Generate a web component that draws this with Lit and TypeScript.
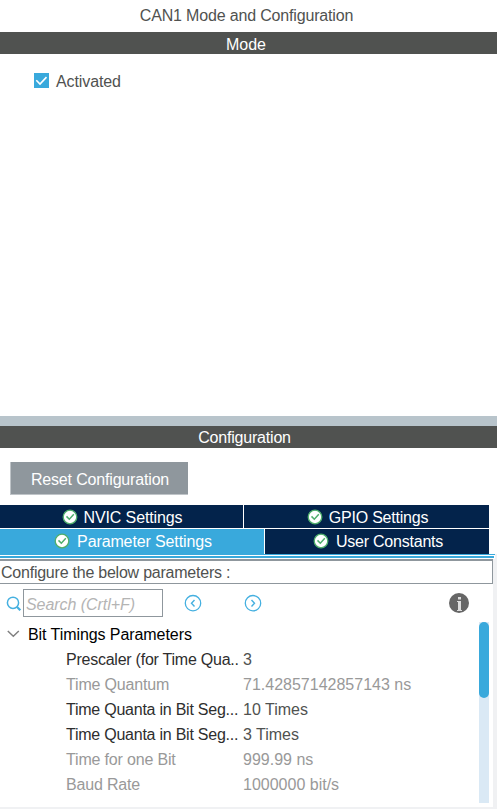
import { LitElement, html, css, svg } from "lit";
import { customElement } from "lit/decorators.js";
import { classMap } from "lit/directives/class-map.js";

interface Param {
  name: string;
  value: string;
  readonly?: boolean;
}

const PARAMS: Param[] = [
  { name: "Prescaler (for Time Qua..", value: "3" },
  { name: "Time Quantum", value: "71.42857142857143 ns", readonly: true },
  { name: "Time Quanta in Bit Seg...", value: "10 Times" },
  { name: "Time Quanta in Bit Seg...", value: "3 Times" },
  { name: "Time for one Bit", value: "999.99 ns", readonly: true },
  { name: "Baud Rate", value: "1000000 bit/s", readonly: true },
];

const okIcon = html`<svg class="ok" viewBox="0 0 16 16" width="16" height="16">
  <circle cx="8" cy="8" r="6.8" fill="#fff" stroke="#4fae6c" stroke-width="1.3" />
  <path d="M4.5 7.4 7.3 10.2 11.8 5.2" fill="none" stroke="#4fae6c" stroke-width="1.5" />
</svg>`;

const circleArrow = (d: string) => html`<svg viewBox="0 0 18 18" width="18" height="18">
  ${svg`<circle cx="9" cy="9.2" r="7.7" fill="none" stroke="#45b0e0" stroke-width="1.3" />
  <path d=${d} fill="none" stroke="#45b0e0" stroke-width="1.4" />`}
</svg>`;

@customElement("app-root")
export class AppRoot extends LitElement {
  static styles = css`
    :host {
      display: flex;
      flex-direction: column;
      box-sizing: border-box;
      height: 809px;
      overflow: hidden;
      background: #fff;
      color: #505250;
      font: 16px/22px "Liberation Sans", Arial, sans-serif;
      white-space: nowrap;
    }
    * { box-sizing: border-box; }
    svg { display: block; flex: none; }
    .title { height: 32px; line-height: 32px; padding-right: 4px; text-align: center; letter-spacing: -0.17px; }
    .bar { height: 22px; padding-right: 5px; background: #505250; color: #fff; text-align: center; line-height: 25px; }
    .cfg { line-height: 23px; padding-right: 8px; letter-spacing: -0.2px; }
    .mode { height: 362px; padding: 19px 34px; }
    .check { display: flex; align-items: center; gap: 7px; height: 16px; line-height: 16px; letter-spacing: -0.1px; }
    .check svg { margin-bottom: 1px; }
    .check span { padding-top: 2px; }
    .splitter { height: 10px; background: #b8c4cb; }
    .actions { height: 57px; padding: 14px 10px 0; }
    .reset {
      display: block; width: 178px; height: 33px; padding: 3px 0 0 1px; margin: 0;
      border: solid #bfc4c8; border-width: 0 0 1px 1px;
      background: #8f979d; color: #fff; font: inherit; letter-spacing: -0.17px;
    }
    .tabs { width: 489px; display: flex; flex-direction: column; gap: 1px; color: #fff; }
    .tabrow { display: flex; gap: 1px; height: 23px; }
    .tabrow.second { height: 25px; }
    .tab { display: flex; align-items: center; justify-content: center; gap: 6px; background: #03234b; }
    .tab span { letter-spacing: -0.12px; line-height: 22px; padding-top: 2px; }
    .second .ok { margin-bottom: 1px; }
    .second .tab span { padding: 0; }
    .nvic { width: 243px; padding-left: 1px; }
    .gpio { width: 245px; padding-left: 2px; }
    .tab.gpio span, .tab.user span { letter-spacing: -0.22px; }
    .param { width: 264px; padding-left: 2px; background: #39a9dc; }
    .tab.param { gap: 7px; }
    .user { width: 224px; padding-left: 2px; }
    .tab.user { gap: 7px; }
    .content { flex: 1; background: #f0f1f3; padding-bottom: 2px; }
    .rule { width: 495px; height: 5px; border-top: 1px solid #39a9dc; background: #fff; padding-top: 1px; }
    .rule i { display: block; width: 494px; height: 2px; background: #39a9dc; }
    .pane { width: 493px; height: 248px; background: #fff; }
    .caption { height: 25px; border: 1px solid #8f979d; border-width: 2px 1px 1px 0; padding-left: 1px; line-height: 24px; letter-spacing: -0.23px; }
    .tools { display: flex; align-items: center; height: 38px; padding: 0 24px 0 6px; }
    .search {
      width: 140px; height: 28px; margin: 0 21px 0 1px; padding: 3px 0 0 2px; border: 1px solid #8f979d;
      border-radius: 0; font: italic 16px "Liberation Sans", Arial, sans-serif; letter-spacing: -0.05px; outline: 0;
    }
    .search::placeholder { color: #b4b4b4; opacity: 1; }
    .gap { width: 42px; }
    .grow { flex: 1; }
    .body { display: flex; justify-content: space-between; height: 181px; padding-right: 4px; }
    .group { display: flex; align-items: center; height: 25px; padding-left: 7px; gap: 8px; color: #000; letter-spacing: -0.07px; }
    .group svg { margin-bottom: 1px; }
    .row { display: grid; grid-template-columns: 177px 200px; height: 25px; line-height: 25px; padding-left: 66px; }
    .name { color: #2e2e2e; letter-spacing: -0.24px; }
    .readonly { color: #999; }
    .readonly .name { color: #999; letter-spacing: -0.17px; }
    .track { width: 10px; height: 181px; background: #dae9f5; }
    .thumb { height: 76px; border-radius: 5px; background: #39a9dc; }
  `;

  render() {
    return html`
      <div class="title">CAN1 Mode and Configuration</div>
      <div class="bar">Mode</div>
      <div class="mode">
        <div class="check">
          <svg viewBox="0 0 15 15" width="15" height="15">
            <rect width="15" height="15" fill="#39a9dc" />
            <path d="M2.3 7.3 6 11 12.5 4.1" fill="none" stroke="#fff" stroke-width="1.6" />
          </svg>
          <span>Activated</span>
        </div>
      </div>
      <div class="splitter"></div>
      <div class="bar cfg">Configuration</div>
      <div class="actions"><button class="reset">Reset Configuration</button></div>
      <div class="tabs">
        <div class="tabrow">
          <div class="tab nvic">${okIcon}<span>NVIC Settings</span></div>
          <div class="tab gpio">${okIcon}<span>GPIO Settings</span></div>
        </div>
        <div class="tabrow second">
          <div class="tab param">${okIcon}<span>Parameter Settings</span></div>
          <div class="tab user">${okIcon}<span>User Constants</span></div>
        </div>
      </div>
      <div class="content">
        <div class="rule"><i></i></div>
        <div class="pane">
          <div class="caption">Configure the below parameters :</div>
          <div class="tools">
            <svg viewBox="0 0 16 16" width="16" height="16">
              <circle cx="7" cy="7.8" r="5.6" fill="none" stroke="#45b0e0" stroke-width="1.5" />
              <path d="M10.8 11.8 14.3 15.2" stroke="#45b0e0" stroke-width="2.3" />
            </svg>
            <input class="search" placeholder="Search (Crtl+F)" />
            ${circleArrow("M10.5 6 7.5 9.2 10.5 12.4")}
            <div class="gap"></div>
            ${circleArrow("M7.5 6 10.5 9.2 7.5 12.4")}
            <div class="grow"></div>
            <svg viewBox="0 0 20 20" width="20" height="20">
              <circle cx="10" cy="10" r="10" fill="#666" />
              <path d="M9 4h3v2.4H9zM8 8h4v9h1v1H8v-1h1V9H8z" fill="#ddd" />
            </svg>
          </div>
          <div class="body">
            <div>
              <div class="group">
                <svg viewBox="0 0 13 8" width="13" height="8">
                  <path d="M.8 1 6.3 6.2 11.8 1" fill="none" stroke="#808080" stroke-width="1.5" />
                </svg>
                <span>Bit Timings Parameters</span>
              </div>
              ${PARAMS.map(
                (p) => html`<div class=${classMap({ row: true, readonly: !!p.readonly })}>
                  <span class="name">${p.name}</span><span>${p.value}</span>
                </div>`
              )}
            </div>
            <div class="track"><div class="thumb"></div></div>
          </div>
        </div>
      </div>
    `;
  }
}
